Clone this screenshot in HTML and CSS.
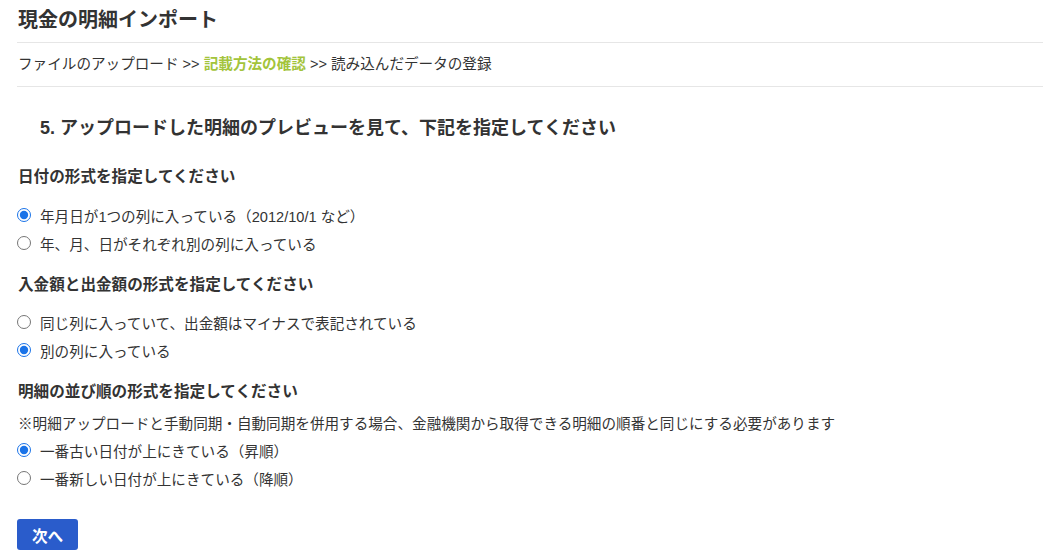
FILE: index.html
```html
<!DOCTYPE html>
<html lang="ja">
<head>
<meta charset="utf-8">
<link rel="stylesheet" href="styles.css">
</head>
<body>
<div class="page">
  <h1 class="title">現金の明細インポート</h1>
  <div class="crumbs">ファイルのアップロード &gt;&gt; <span class="current">記載方法の確認</span> &gt;&gt; 読み込んだデータの登録</div>
  <h2 class="step">5. アップロードした明細のプレビューを見て、下記を指定してください</h2>

  <section class="group">
    <h3 class="group-title">日付の形式を指定してください</h3>
    <label class="opt"><input type="radio" name="d" checked><span>年月日が1つの列に入っている（2012/10/1 など）</span></label>
    <label class="opt"><input type="radio" name="d"><span>年、月、日がそれぞれ別の列に入っている</span></label>
  </section>

  <section class="group">
    <h3 class="group-title">入金額と出金額の形式を指定してください</h3>
    <label class="opt"><input type="radio" name="a"><span>同じ列に入っていて、出金額はマイナスで表記されている</span></label>
    <label class="opt"><input type="radio" name="a" checked><span>別の列に入っている</span></label>
  </section>

  <section class="group group-order">
    <h3 class="group-title">明細の並び順の形式を指定してください</h3>
    <p class="note">※明細アップロードと手動同期・自動同期を併用する場合、金融機関から取得できる明細の順番と同じにする必要があります</p>
    <label class="opt"><input type="radio" name="o" checked><span>一番古い日付が上にきている（昇順）</span></label>
    <label class="opt"><input type="radio" name="o"><span>一番新しい日付が上にきている（降順）</span></label>
  </section>

  <button class="next" type="button">次へ</button>
</div>
</body>
</html>
```
FILE: styles.css
```css
html, body {
  margin: 0;
  padding: 0;
  background: #fff;
}
body {
  font-family: "Liberation Sans", "Noto Sans CJK JP", sans-serif;
  color: #333;
}
.page {
  padding-left: 17px;
}
.title {
  margin: 0;
  font-size: 20px;
  font-weight: bold;
  line-height: 40px;
  height: 43px;
  box-sizing: border-box;
  border-bottom: 1px solid #e6e6e6;
  color: #333;
  padding-left: 1px;
}
.crumbs {
  height: 44px;
  line-height: 43px;
  box-sizing: border-box;
  border-bottom: 1px solid #e6e6e6;
  font-size: 14.6px;
  padding-left: 1px;
  color: #333;
}
.current {
  color: #a3c43b;
  font-weight: bold;
}
.step {
  margin: 29px 0 0 0;
  padding-left: 23px;
  font-size: 18px;
  font-weight: bold;
  line-height: 24px;
  color: #333;
}
.group {
  margin-top: 25px;
}
.group + .group {
  margin-top: 16px;
}
.group-title {
  margin: 0 0 12px 0;
  font-size: 15.6px;
  font-weight: bold;
  line-height: 24px;
  padding-left: 1px;
}
.group + .group .group-title {
  margin-bottom: 11px;
}
.opt {
  display: flex;
  align-items: center;
  height: 28px;
  font-size: 14.6px;
  color: #333;
}
.opt input {
  margin: 0 9px 0 0;
  width: 14px;
  height: 14px;
  accent-color: #1a73e8;
}
.group.group-order .group-title {
  margin-bottom: 8px;
}
.note {
  margin: 0;
  font-size: 14.6px;
  line-height: 24px;
  height: 24px;
  padding-left: 1px;
}
.next {
  display: block;
  margin-top: 27px;
  width: 61px;
  height: 31px;
  border: 0;
  border-radius: 3px;
  background: #2a5ccb;
  color: #fff;
  font-family: "Liberation Sans", "Noto Sans CJK JP", sans-serif;
  font-size: 15.6px;
  font-weight: bold;
  padding: 0;
}
```
